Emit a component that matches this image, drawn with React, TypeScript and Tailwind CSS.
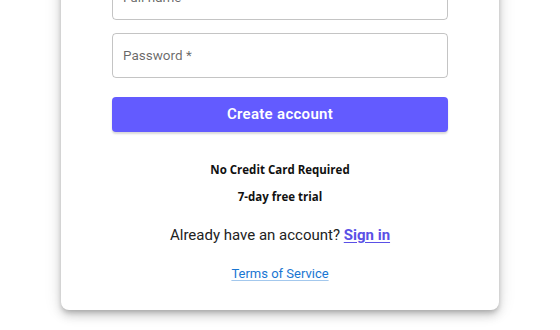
export default function App() {
  return (
    <div className="min-h-screen bg-white font-['Roboto',sans-serif] overflow-hidden">
      <div className="mx-auto w-[438px] -mt-[40px] pt-[15px] pb-[26px] px-[51px] bg-white rounded-lg shadow-[0_3px_5px_-1px_rgba(0,0,0,0.2),0_6px_10px_0_rgba(0,0,0,0.14),0_1px_18px_0_rgba(0,0,0,0.12)]">
        {/* Full name */}
        <div className="h-[45px] rounded border border-[rgba(0,0,0,0.23)] flex items-center px-[10px] text-[13.5px] text-[rgba(0,0,0,0.6)]">
          Full name *
        </div>

        {/* Password */}
        <div className="mt-[13px] h-[45px] rounded border border-[rgba(0,0,0,0.23)] flex items-center px-[10px] text-[13.5px] text-[rgba(0,0,0,0.6)]">
          Password *
        </div>

        <button className="mt-[19px] w-full h-[35px] rounded bg-[#635bff] text-white text-[15px] font-semibold tracking-[0.02em] shadow-[0_2px_2px_rgba(0,0,0,0.15)]">
          Create account
        </button>

        <div className="mt-[30px] text-center font-['Open_Sans',sans-serif] font-bold text-[11.5px] text-[#111] leading-[16px]">
          No Credit Card Required
        </div>
        <div className="mt-[11px] text-center font-['Open_Sans',sans-serif] font-bold text-[11.5px] text-[#111] leading-[16px]">
          7-day free trial
        </div>

        <div className="mt-[19px] text-center text-[15px] text-[#222] leading-[22px]">
          Already have an account?{" "}
          <a href="#" className="font-bold text-[#5a50e6] underline underline-offset-2">
            Sign in
          </a>
        </div>

        <div className="mt-[18px] text-center text-[13px] leading-[20px]">
          <a href="#" className="text-[#1976d2] underline underline-offset-2 decoration-[rgba(25,118,210,0.4)]">
            Terms of Service
          </a>
        </div>
      </div>
    </div>
  );
}
